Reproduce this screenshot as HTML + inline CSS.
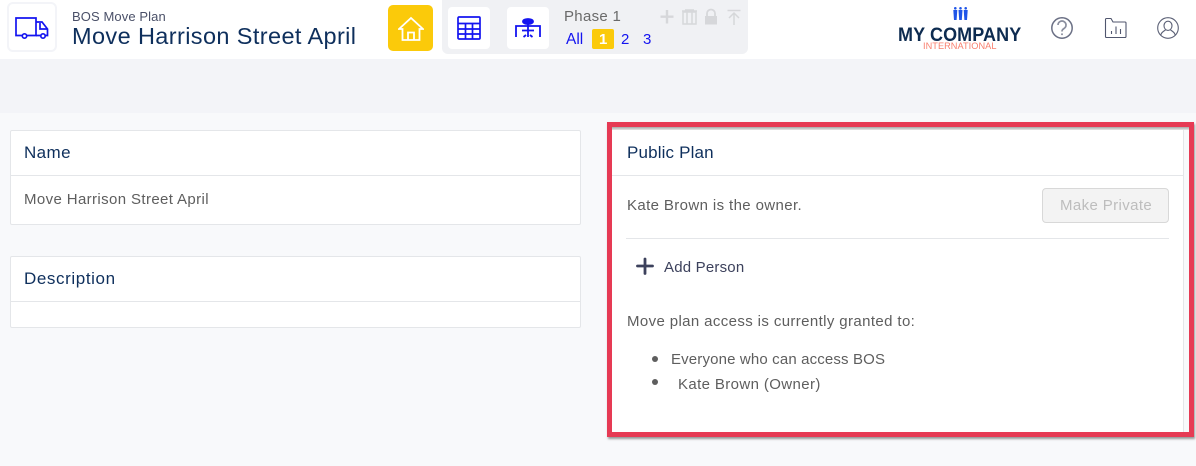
<!DOCTYPE html>
<html><head><meta charset="utf-8">
<style>
html,body{margin:0;padding:0;width:1196px;height:466px;overflow:hidden;background:#f8f9fb;font-family:"Liberation Sans",sans-serif}
.a{position:absolute}
.t{position:absolute;white-space:nowrap;line-height:1}
.card{position:absolute;background:#fff;border:1px solid #e4e6e9;border-radius:2px;box-sizing:border-box}
.line{position:absolute;height:1px;background:#e4e6e9}
.h{color:#0e2f5c;font-size:17px;letter-spacing:.4px}
.b{color:#5e5e5e;font-size:15px;letter-spacing:.38px}
</style></head>
<body>
<div class="a" style="left:0;top:0;width:1196px;height:59px;background:#fff"></div>
<div class="a" style="left:0;top:59px;width:1196px;height:54px;background:#f3f4f8"></div>

<div class="a" style="left:7px;top:2px;width:50px;height:50px;box-sizing:border-box;border:2px solid #f3f4f8;border-radius:6px;background:#fff"></div>
<svg class="a" style="left:14px;top:16px" width="36" height="24" viewBox="0 0 36 24" fill="none" stroke="#1414f0" stroke-width="1.700">
<path d="M8.500 19.500H2V2H22V19.500H12.500"/><path d="M26.500 19.500H22M22 6H28L33.500 13V19.500H31.500"/><path d="M26 7V13H33"/>
<circle cx="10.500" cy="20" r="2.200"/><circle cx="29" cy="20" r="2.200"/></svg>
<div class="t" style="left:72px;top:10px;font-size:13px;color:#4a5068;letter-spacing:.1px">BOS Move Plan</div>
<div class="t" style="left:72px;top:25px;font-size:23.500px;color:#0e2f5c;letter-spacing:.39px">Move Harrison Street April</div>

<div class="a" style="left:388px;top:5px;width:45px;height:46px;background:#fbca0a;border-radius:5px"></div>
<svg class="a" style="left:398px;top:16px" width="26" height="26" viewBox="0 0 26 26" fill="none" stroke="#fff" stroke-width="1.800">
<path d="M1 13L13 2L25 13H21.500V24H4.500V13Z"/><path d="M10 24V16.500H16V24"/></svg>

<div class="a" style="left:442px;top:0;width:306px;height:54px;background:#f0f1f4;border-radius:0 0 6px 6px"></div>
<div class="a" style="left:448px;top:7px;width:42px;height:42px;background:#fff;border-radius:4px"></div>
<svg class="a" style="left:457px;top:16px" width="25" height="24" viewBox="0 0 25 24" fill="none" stroke="#1414f0" stroke-width="1.700">
<rect x="1" y="1" width="22" height="22" rx="1"/><path d="M1 7.500H23M1 13H23M1 18H23M8.500 7.500V23M15.500 7.500V23"/></svg>
<div class="a" style="left:507px;top:7px;width:42px;height:42px;background:#fff;border-radius:4px"></div>
<svg class="a" style="left:514px;top:17px" width="28" height="21" viewBox="0 0 28 21" fill="none" stroke="#1414f0" stroke-width="1.800">
<ellipse cx="14" cy="4.500" rx="5" ry="2.500" fill="#1414f0"/><path d="M2 20V9H26V20"/><path d="M14 7V20M8 13.500H20M9.500 20L12 18M18.500 20L16 18"/></svg>

<div class="t" style="left:564px;top:9px;font-size:15px;color:#6a6a6a;letter-spacing:.3px">Phase 1</div>
<div class="t" style="left:566px;top:32px;font-size:15.500px;color:#1414f0">All</div>
<div class="a" style="left:592px;top:29px;width:22px;height:20px;background:#fbca0a;border-radius:2px"></div>
<div class="t" style="left:599px;top:32px;font-size:15px;color:#fff;font-weight:bold">1</div>
<div class="t" style="left:621px;top:32px;font-size:15px;color:#1414f0">2</div>
<div class="t" style="left:643px;top:32px;font-size:15px;color:#1414f0">3</div>

<svg class="a" style="left:655px;top:5px" width="90" height="25" viewBox="0 0 90 25" fill="none" stroke="#d6d7da" stroke-width="1.500">
<path d="M12 5V18.500M5.500 11.700H18.500" stroke-width="2.400"/>
<path d="M28 7H41V19H28ZM27 6H42M32 7V19M37 7V19M30 5H39"/>
<path d="M52 11.500V8.500a4 4 0 0 1 8 0V11.500" stroke-width="1.800"/>
<path d="M50 11H62V19.500H50Z" fill="#d6d7da" stroke="none"/>
<path d="M72.500 5.500H85.500M79 8V20M74 13L79 8L84 13"/></svg>

<svg class="a" style="left:953px;top:7px" width="15" height="13" viewBox="0 0 15 13" fill="#1f55e8">
<circle cx="2.300" cy="1.300" r="1.300"/><path d="M.3 3H4.300L3.600 13H1Z"/>
<circle cx="7.500" cy="1.300" r="1.300"/><path d="M5.500 3H9.500L8.800 13H6.200Z"/>
<circle cx="12.700" cy="1.300" r="1.300"/><path d="M10.700 3H14.700L14 13H11.400Z"/></svg>
<div class="t" style="left:898px;top:25px;font-size:18px;font-weight:bold;color:#0d2b50;letter-spacing:.1px;transform:scale(1,1.08);transform-origin:0 0">MY COMPANY</div>
<div class="t" style="left:923px;top:42px;font-size:9.200px;color:#f9806f;letter-spacing:.05px">INTERNATIONAL</div>

<svg class="a" style="left:1050px;top:16px" width="24" height="24" viewBox="0 0 24 24" fill="none" stroke="#6b7085" stroke-width="1.500">
<circle cx="12" cy="12" r="10.200"/><path d="M8 9a4 4 0 1 1 6 3.500c-1.400.8-2 1.500-2 3" stroke-width="1.700" stroke="#8a8e9e"/><circle cx="12" cy="18.200" r="1" fill="#8a8e9e" stroke="none"/></svg>
<svg class="a" style="left:1104px;top:17px" width="24" height="22" viewBox="0 0 24 22" fill="none" stroke="#50566e" stroke-width="1.100">
<path d="M1.500 2.500V19.500a1 1 0 0 0 1 1H21a1 1 0 0 0 1-1V6a1 1 0 0 0-1-1H9L7 1.500H2.500a1 1 0 0 0-1 1Z"/><path d="M7.500 17V14M12 17V9.500M16.500 17V12"/></svg>
<svg class="a" style="left:1156px;top:16px" width="24" height="24" viewBox="0 0 24 24" fill="none" stroke="#5b6076" stroke-width="1.100">
<circle cx="12" cy="12" r="10.300"/><ellipse cx="12" cy="9.800" rx="4" ry="4.600"/><path d="M4.800 19C5.500 16 8 15 9.500 14M19.200 19C18.500 16 16 15 14.500 14"/></svg>

<div class="card" style="left:10px;top:130px;width:571px;height:95px"></div>
<div class="line" style="left:11px;top:175px;width:569px"></div>
<div class="t h" style="left:24px;top:144px">Name</div>
<div class="t b" style="left:24px;top:192px">Move Harrison Street April</div>

<div class="card" style="left:10px;top:256px;width:571px;height:72px"></div>
<div class="line" style="left:11px;top:301px;width:569px"></div>
<div class="t h" style="left:24px;top:270px;letter-spacing:.6px">Description</div>

<div class="a" style="left:612px;top:127px;width:571px;height:305px;background:#fff;border-right:1px solid #e4e6e9"></div>
<div class="a" style="left:612px;top:127px;width:577px;height:3px;background:linear-gradient(#a8a8a8,#e6e6e6)"></div>
<div class="a" style="left:607px;top:122px;width:587px;height:315px;box-sizing:border-box;border:5px solid #e63a54;box-shadow:1px 2px 2px rgba(60,60,60,.5)"></div>

<div class="line" style="left:612px;top:175px;width:571px"></div>
<div class="t h" style="left:627px;top:144px;letter-spacing:.15px">Public Plan</div>
<div class="t b" style="left:627px;top:198px">Kate Brown is the owner.</div>
<div class="a" style="left:1042px;top:188px;width:127px;height:35px;box-sizing:border-box;background:#f3f3f3;border:1px solid #d8d8d8;border-radius:4px"></div>
<div class="t b" style="left:1060px;top:198px;color:#bdbdbd">Make Private</div>
<div class="line" style="left:626px;top:238px;width:543px"></div>
<svg class="a" style="left:636px;top:257px" width="18" height="18" viewBox="0 0 18 18" fill="none" stroke="#3c415c" stroke-width="2.800" stroke-linecap="round"><path d="M9 2V16.500M1.500 9H16.500"/></svg>
<div class="t b" style="left:664px;top:260px;color:#3c415c;letter-spacing:.2px">Add Person</div>
<div class="t b" style="left:627px;top:314px">Move plan access is currently granted to:</div>
<div class="a" style="left:652px;top:356px;width:6px;height:6px;border-radius:50%;background:#5e5e5e"></div>
<div class="t b" style="left:671px;top:352px;letter-spacing:.15px">Everyone who can access BOS</div>
<div class="a" style="left:652px;top:379px;width:6px;height:6px;border-radius:50%;background:#5e5e5e"></div>
<div class="t b" style="left:678px;top:377px">Kate Brown (Owner)</div>
</body></html>
